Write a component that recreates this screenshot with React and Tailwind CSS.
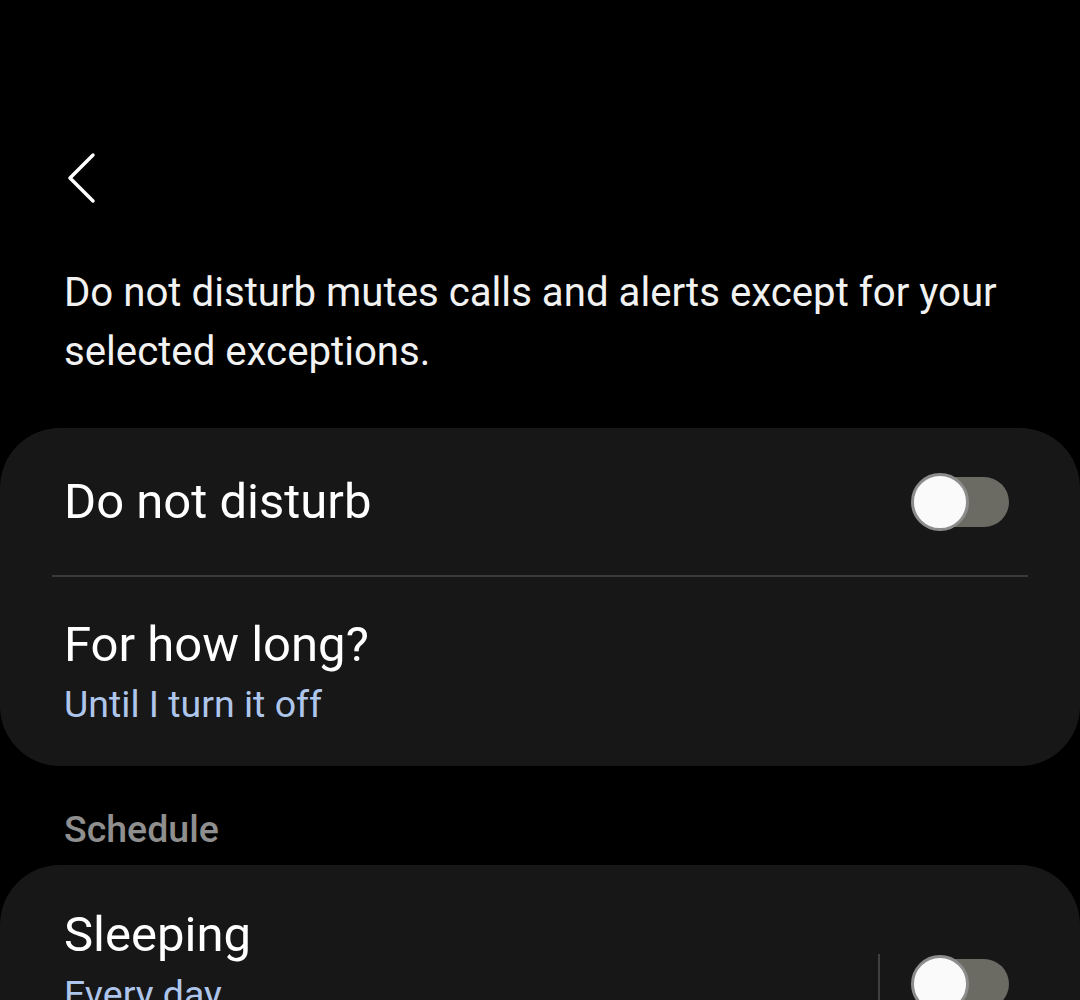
import React from "react";

function Toggle() {
  return (
    <div className="relative w-[98px] h-[58px] shrink-0">
      <div className="absolute right-0 top-[4px] h-[50px] w-[84px] rounded-full bg-[#6b6b64]" />
      <div className="absolute left-0 top-0 h-[58px] w-[58px] rounded-full bg-[#fafafa] border-[3px] border-[#8c8c8c]" />
    </div>
  );
}

export default function App() {
  return (
    <div
      className="w-[1080px] h-[1000px] overflow-hidden bg-black text-white"
      style={{ fontFamily: "Roboto, 'Noto Sans', sans-serif" }}
    >
      <div className="h-[150px]" />
      <div className="pl-[66px] h-[56px]">
        <svg width="34" height="56" viewBox="0 0 34 56" fill="none">
          <path
            d="M27 5 L4 28 L27 51"
            stroke="#ffffff"
            strokeWidth="3.5"
            strokeLinecap="round"
            strokeLinejoin="round"
          />
        </svg>
      </div>
      <div className="h-[57px]" />
      <p className="px-[64px] text-[40.2px] leading-[59px] text-[#f2f2f2]">
        Do not disturb mutes calls and alerts except for your selected exceptions.
      </p>
      <div className="h-[47px]" />

      <div className="bg-[#171717] rounded-[60px]">
        <div className="h-[147px] flex items-center justify-between pl-[64px] pr-[71px]">
          <span className="text-[49px] leading-[58px] text-white">Do not disturb</span>
          <Toggle />
        </div>
        <div className="mx-[52px] h-[2px] bg-[#3a3a3a]" />
        <div className="pl-[64px] pt-[39px] pb-[37px]">
          <div className="text-[49px] leading-[58px] text-white">For how long?</div>
          <div className="mt-[5px] text-[37.5px] leading-[50px] text-[#afc6ec]">
            Until I turn it off
          </div>
        </div>
      </div>

      <div className="mt-[41px] pl-[64px] text-[37.5px] leading-[44px] font-medium text-[#8f8f8f]">
        Schedule
      </div>

      <div className="mt-[14px] bg-[#171717] rounded-[60px] h-[300px]">
        <div className="flex items-start justify-between pl-[64px] pr-[71px] pt-[41px]">
          <div>
            <div className="text-[49px] leading-[58px] text-white">Sleeping</div>
            <div className="mt-[5px] text-[37.5px] leading-[50px] text-[#afc6ec]">Every day</div>
          </div>
          <div className="mt-[48px] flex items-center gap-[31px]">
            <div className="w-[2px] h-[60px] bg-[#3f3f3f]" />
            <Toggle />
          </div>
        </div>
      </div>
    </div>
  );
}
